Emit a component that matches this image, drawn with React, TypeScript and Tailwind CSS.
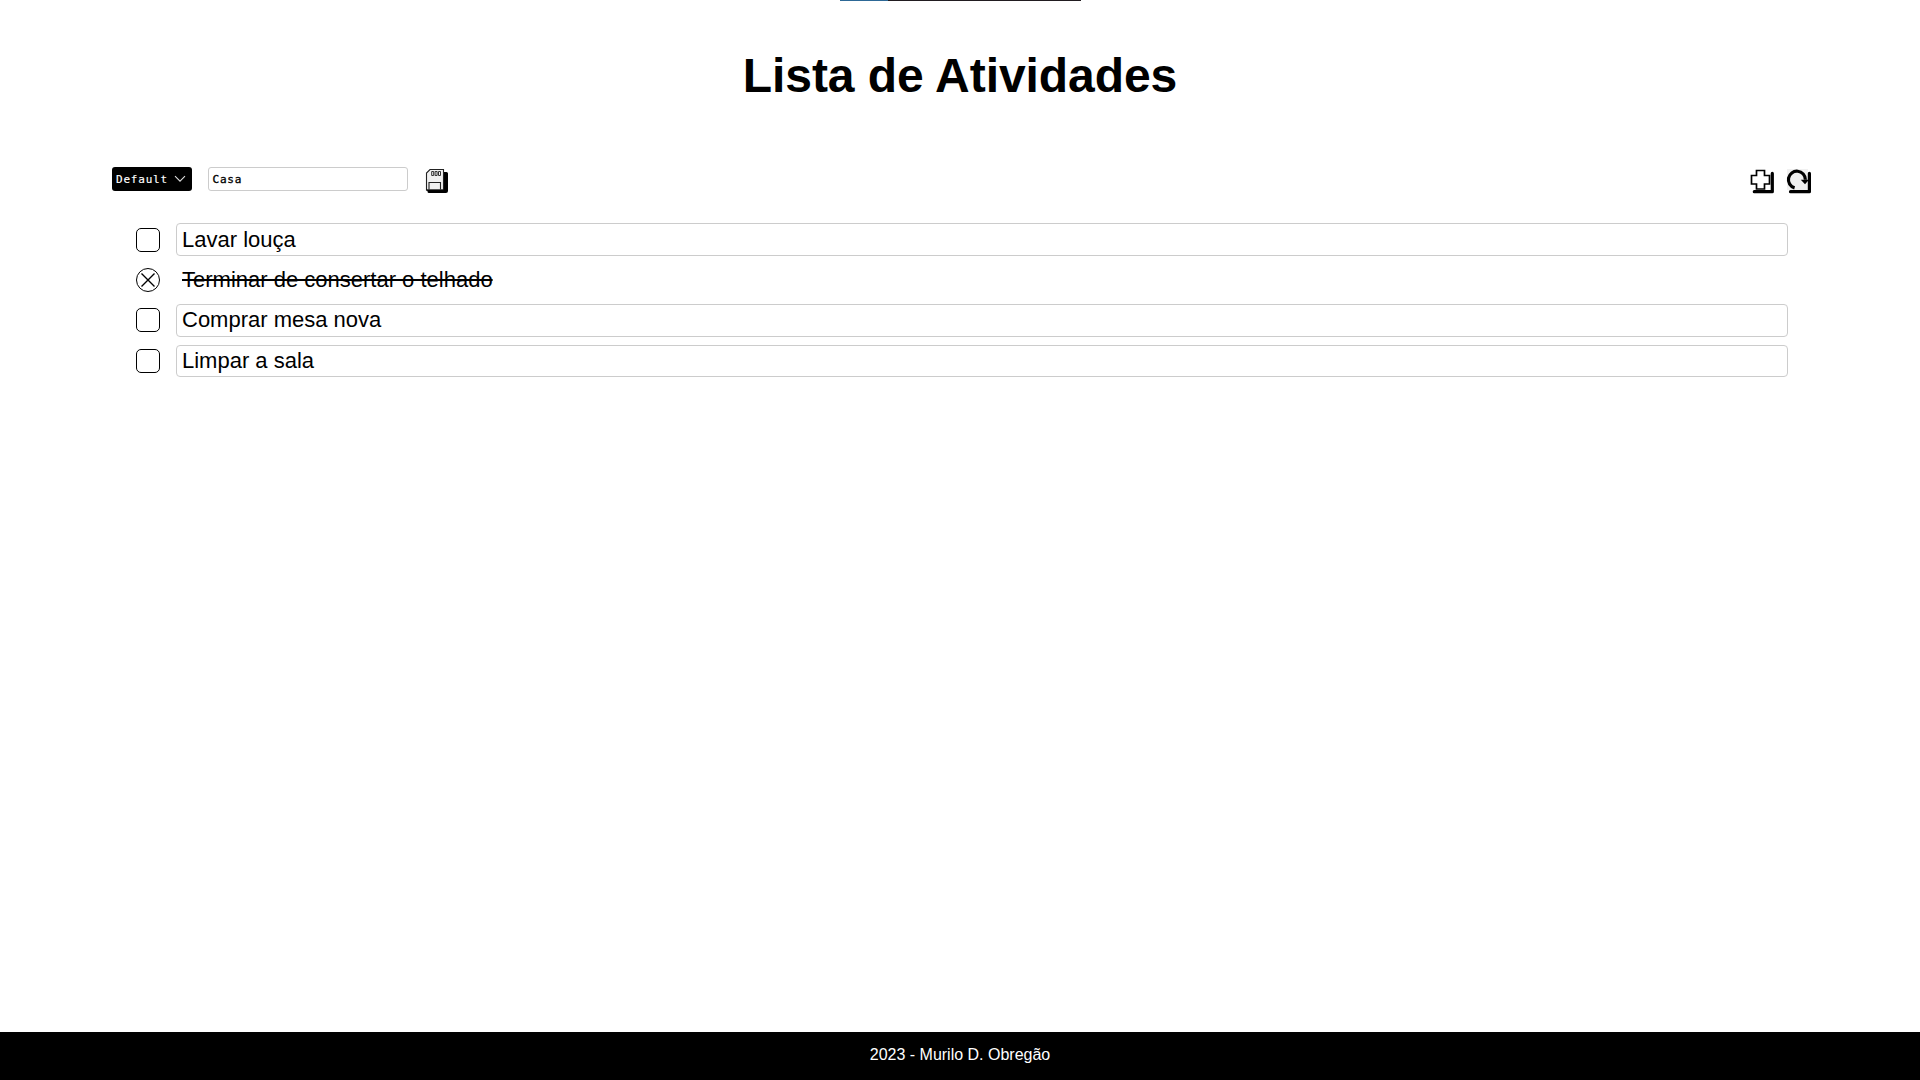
import React from "react";

type Activity = { text: string; done: boolean; row: string; field: string; content: string };

const activities: Activity[] = [
  { text: "Lavar louça", done: false, row: "h-[33px] mb-2", field: "h-[33px]", content: "items-center" },
  { text: "Terminar de consertar o telhado", done: true, row: "h-8 mb-2", field: "h-8", content: "items-center" },
  { text: "Comprar mesa nova", done: false, row: "h-[33px] mb-2", field: "h-[33px]", content: "items-start pt-[3px]" },
  { text: "Limpar a sala", done: false, row: "h-8", field: "h-8", content: "items-center" },
];

function SaveIcon() {
  return (
    <svg width="24" height="26" viewBox="0 0 24 26" fill="none">
      <path d="M18.5 4H21.5Q23 4 23 5.5V23Q23 25 21 25H4Q2.5 25 2.5 23.5V22H18.5Z" fill="#000" />
      <path d="M5 1.5H18.5V22H1.5V5Z" fill="#f0f0f0" stroke="#222" strokeWidth="1.1" />
      <path d="M4 21.5V14.5H15.5V21.5" stroke="#222" strokeWidth="1.1" />
      <path d="M1.5 22.2H19" stroke="#000" strokeWidth="1.2" />
      <path d="M6.7 3.5h2v4h-2ZM10.1 3.5h2v4h-2ZM13.5 3.5h2v4h-2Z" stroke="#333" strokeWidth="1" />
    </svg>
  );
}

function AddIcon() {
  return (
    <svg width="24" height="25" viewBox="0 0 24 25" fill="none">
      <path d="M4.3 22.7H22.3V4.4" stroke="#000" strokeWidth="3.2" strokeLinejoin="round" strokeLinecap="round" />
      <path d="M6.5 1.5H14.5V6.5H19.5V15H14.5V20H6.5V15H1.5V6.5H6.5Z" fill="#fff" stroke="#000" strokeWidth="1.7" />
    </svg>
  );
}

function ReloadIcon() {
  return (
    <svg width="26" height="25" viewBox="0 0 26 25" fill="none">
      <rect x="1" y="0" width="21" height="21" fill="#f0f0f0" />
      <path d="M4.5 22.7H23.4V4.4" stroke="#000" strokeWidth="3.2" strokeLinejoin="round" strokeLinecap="round" />
      <path d="M8.6 18.9A8.5 8.5 0 1 1 19.4 10.8" stroke="#000" strokeWidth="3.2" />
      <path d="M14.8 10.8H23L19 15.2Z" fill="#000" />
    </svg>
  );
}

function Check({ done }: { done: boolean }) {
  if (!done) {
    return <button className="h-6 w-6 shrink-0 rounded-[5px] border border-black bg-white" />;
  }
  return (
    <button className="h-6 w-6 shrink-0 rounded-full border border-black bg-white">
      <svg width="22" height="22" viewBox="0 0 22 22" fill="none" stroke="#000" strokeWidth="1.4">
        <path d="M4.5 4.5 17.5 17.5M17.5 4.5 4.5 17.5" />
      </svg>
    </button>
  );
}

export default function App() {
  return (
    <div className="flex h-screen flex-col overflow-hidden bg-white font-['Liberation_Sans',Arial,sans-serif] text-black">
      <div className="mx-auto flex h-px w-[241px] shrink-0 bg-[#211c20]">
        <div className="w-12 bg-[#2d6896]" />
      </div>
      <h1 className="mt-12 text-center text-5xl leading-[54px] font-bold tracking-[-0.07px]">Lista de Atividades</h1>
      <div className="mt-16 flex h-6 items-start justify-between pr-[108px] pl-28">
        <div className="flex items-start">
          <div className="flex h-6 w-20 items-center justify-between rounded-[3px] bg-black pr-1.5 pl-1 font-['DejaVu_Sans_Mono',monospace] text-[11px] tracking-[0.8px] text-white">
            <span className="pt-[3px] [-webkit-text-stroke:0.15px_white]">Default</span>
            <svg className="-ml-1 shrink-0" width="12" height="8" viewBox="0 0 12 8" fill="none" stroke="#ddd" strokeWidth="1.1">
              <path d="M1 1.2 6 6.2 11 1.2" />
            </svg>
          </div>
          <div className="ml-4 flex h-6 w-[200px] items-center rounded-[3px] border border-[#ccc] pt-[3px] pl-[3.5px] font-['DejaVu_Sans_Mono',monospace] text-[11px] tracking-[0.8px] [-webkit-text-stroke:0.35px_black]">
            Casa
          </div>
          <button className="mt-px ml-[17px]">
            <SaveIcon />
          </button>
        </div>
        <div className="mt-0.5 flex gap-3">
          <button><AddIcon /></button>
          <button><ReloadIcon /></button>
        </div>
      </div>
      <main className="mt-8 flex-1 pr-[132px] pl-[136px]">
        {activities.map((item) => (
          <div key={item.text} className={`flex gap-4 ${item.row}`}>
            <div className={`flex ${item.content === "items-center" ? "items-center" : "items-start pt-1"}`}>
              <Check done={item.done} />
            </div>
            <div
              className={`flex flex-1 rounded border pl-[5px] text-[22px] leading-6 ${item.field} ${item.content} ${
                item.done ? "border-transparent line-through" : "border-[#ccc]"
              }`}
            >
              {item.text}
            </div>
          </div>
        ))}
      </main>
      <footer className="flex h-12 shrink-0 items-center justify-center bg-black pb-0.5 text-base text-white">
        2023 - Murilo D. Obregão
      </footer>
    </div>
  );
}
